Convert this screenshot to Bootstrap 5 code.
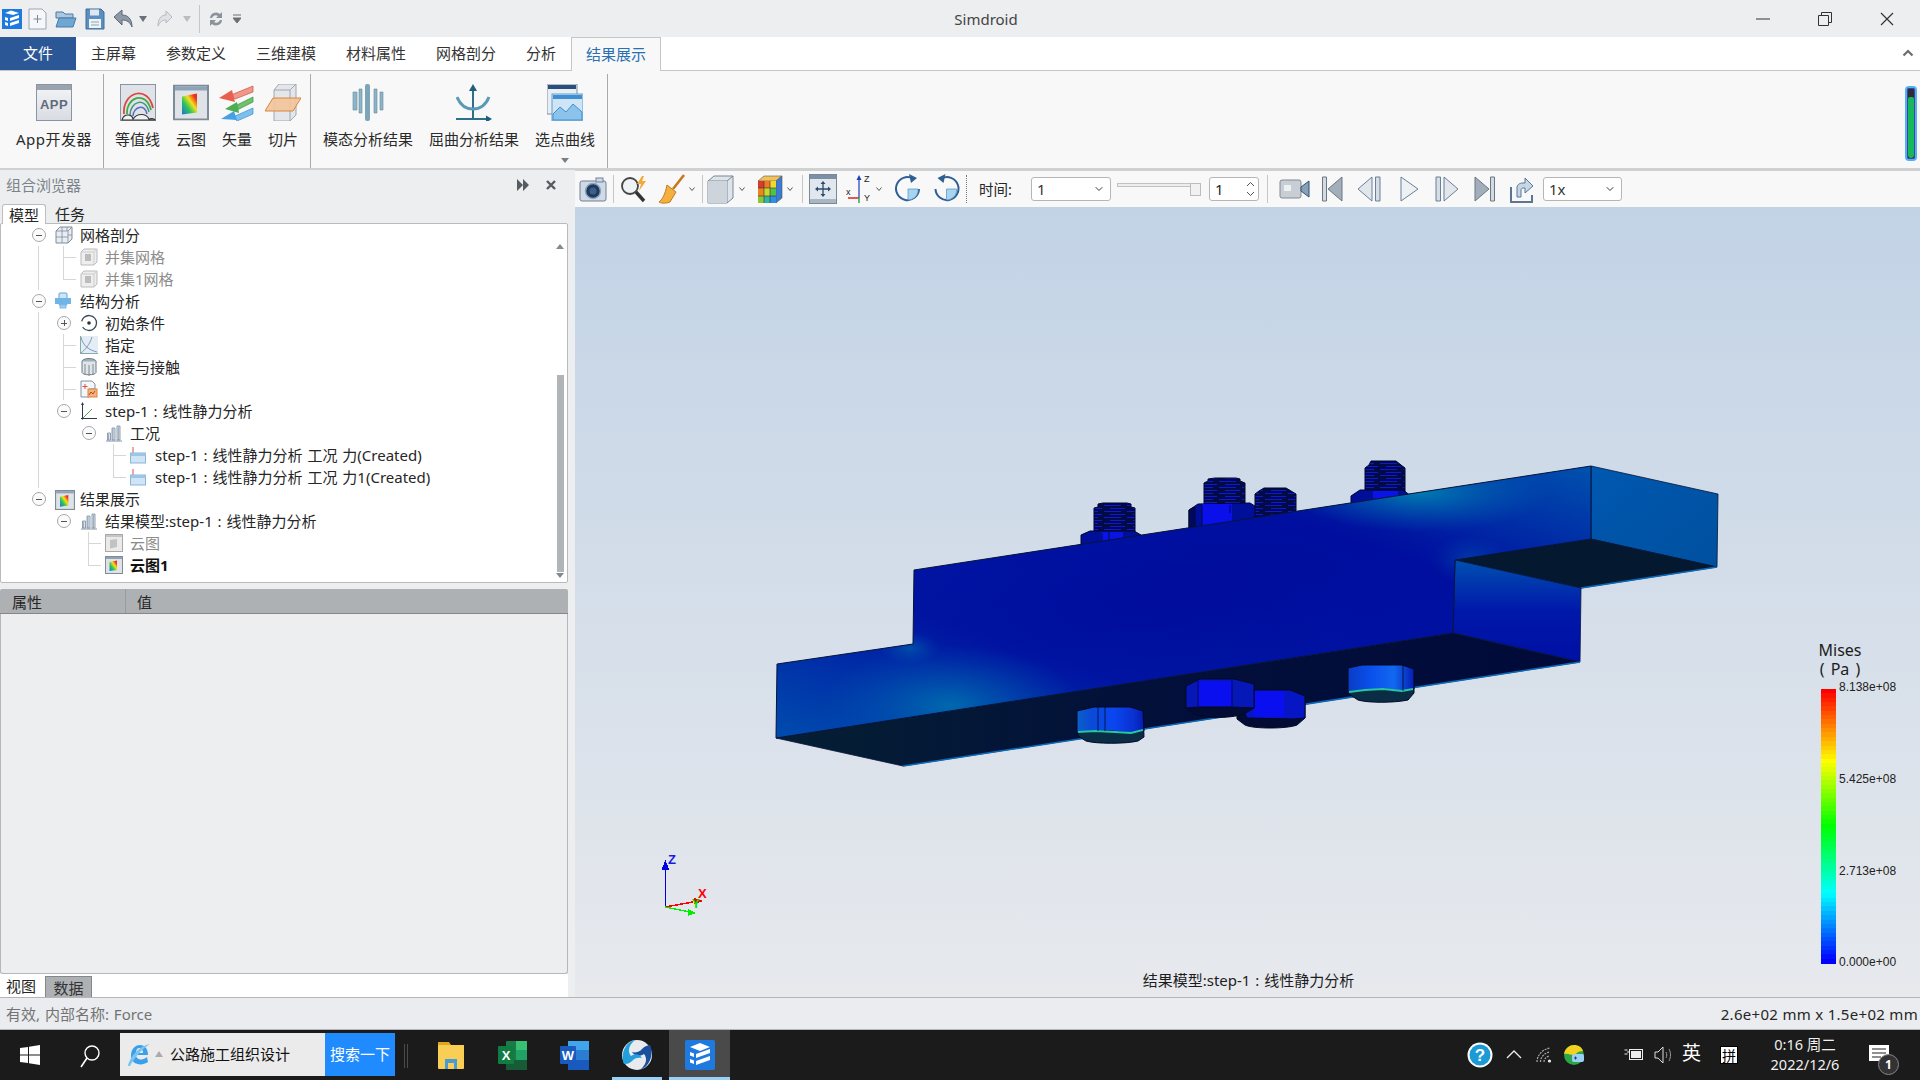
<!DOCTYPE html>
<html lang="zh-CN">
<head>
<meta charset="utf-8">
<title>Simdroid</title>
<link href="https://cdn.jsdelivr.net/npm/bootstrap@5.3.0/dist/css/bootstrap.min.css" rel="stylesheet">
<style>
html,body{height:100%;overflow:hidden}
body{font-family:"Noto Sans","Noto Sans CJK SC",sans-serif;font-size:15px;color:#262626;background:#eceef0;line-height:22px}
svg{display:block;flex:none}
.app-shell{width:1920px;height:1080px}
.title-bar{height:37px;background:#eceef0;padding-left:2px}
.title-text{position:absolute;left:0;right:0;top:8px;text-align:center;font-size:15px;color:#444;pointer-events:none;padding-left:52px}
.win-btns{position:absolute;right:2px;top:0}
.win-btn{width:62px;height:37px}
.tab-row{height:33px;background:#fff;position:relative}
.tab-file{width:76px;background:#2b5797;color:#fff;text-align:center;line-height:32px}
.tab-item{padding:0 15px;line-height:32px;color:#333;white-space:nowrap}
.tab-on{color:#2b6fb3;background:#f8f8f8;border:1px solid #c6c6c6;border-bottom:0;padding:0 14px;height:34px;position:relative;z-index:2}
.tab-up{position:absolute;left:1902px;top:11px}
.ribbon{height:100px;background:#f8f8f8;border-top:1px solid #c6c6c6;border-bottom:2px solid #cfd0d1;position:relative}
.rib-group{height:94px;margin-top:3px;border-right:1px solid #a9a9a9;gap:16px;padding-left:12px}
.rib-g1{width:104px;padding-left:16px}
.rib-g2{width:207px;padding-left:11px}
.rib-g3{width:297px;padding-left:12px}
.rib-item{font-size:15px;white-space:nowrap;text-align:center;color:#2a2a2a;position:relative}
.rib-ic{height:37px;margin-top:10px;margin-bottom:7px;display:flex;justify-content:center}
.rib-ic svg{margin:0 -4px}
.rib-wide{letter-spacing:.5px}
.rib-caret{position:absolute;left:50%;margin-left:-4px;top:84px;width:0;height:0;border:4px solid transparent;border-top:5px solid #7b7f84;border-bottom:0}
.level-meter{position:absolute;left:1905px;top:15px;width:12px;height:75px;background:#2b2b3c;border-radius:4px;border:2px solid #4fb2f2;box-shadow:inset 0 0 0 1px #4a3f9a}
.level-fill{position:absolute;left:1px;right:1px;bottom:1px;top:9px;background:#16b85c;border-radius:2px 2px 3px 3px}
.side-col{width:575px;background:#eceef0}
.dock-head{height:34px;padding:0 6px;color:#7c838b;line-height:30px;position:relative}
.dock-icons{position:absolute;top:9px;left:516px}
.dock-tabs{height:19px;padding-left:2px}
.dock-tab{height:20px;width:44px;line-height:20px;text-align:center}
.dock-tab-on{background:#fff;border:1px solid #bdbdbd;border-bottom:0;border-radius:3px 3px 0 0;position:relative;z-index:1}
.dock-tab-off{width:48px}
.tree-box{width:568px;height:360px;background:#fff;border:1px solid #b8bbbe;border-radius:2px;position:relative;overflow:hidden}
.tree-list{padding-left:24px;margin:0}
.tree-row{height:22px;white-space:nowrap;word-spacing:1px}
.tree-cell{width:25px;height:22px;position:relative;flex:none}
.tree-icon{width:30px;height:22px;padding:2px 0 0 5px;flex:none}
.line-v::before,.line-t::before,.line-l::before{content:"";position:absolute;left:13px;top:0;bottom:0;border-left:1px solid #d6d6d6}
.line-l::before{bottom:50%}
.line-t::after,.line-l::after{content:"";position:absolute;left:13px;top:50%;width:13px;border-top:1px solid #d6d6d6}
.expander{position:absolute;left:7px;top:4px;width:14px;height:14px;border:1px solid #a6a9ac;border-radius:50%;background:#fbfbfb}
.expander::before{content:"";position:absolute;left:3px;right:3px;top:5.5px;height:1px;background:#555}
.exp-plus::after{content:"";position:absolute;top:3px;bottom:3px;left:5.5px;width:1px;background:#555}
.tree-off{color:#8c8c8c}
.tree-bold{font-weight:700;color:#111}
.vbar{position:absolute;left:556px;top:151px;width:7px;height:197px;background:#b2b5b8}
.vbar-up,.vbar-down{position:absolute;left:555px;width:0;height:0;border:4px solid transparent}
.vbar-up{top:20px;border-bottom:5px solid #85898d;border-top:0}
.vbar-down{top:349px;border-top:5px solid #85898d;border-bottom:0}
.prop-head{width:568px;height:25px;margin-top:6px;background:#aeb1b4;border-bottom:1px solid #85888b;border-radius:2px 2px 0 0;line-height:27px}
.prop-c1{width:126px;padding-left:12px;border-right:1px solid #999c9f}
.prop-c2{padding-left:11px}
.prop-body{width:568px;height:360px;background:#eceef0;border:1px solid #b4b7ba;border-top:0;border-radius:0 0 3px 3px}
.bottom-tabs{width:568px;height:23px;background:#fff;position:relative}
.btab{line-height:25px;padding-left:6px;width:45px}
.btab-on{width:47px;height:21px;margin-top:2px;background:#aeb1b4;border:1px solid #85888b;border-bottom:0;padding:0;text-align:center;line-height:23px;color:#333}
.main-area{height:827px}
.tool-bar{height:37px;background:#f8f8f8;border-top:1px solid #cfd0d1}
.tsep{width:1px;height:28px;background:#c4c6c8;flex:none}
.tsep-dot{background:none;border-left:1px dotted #777}
.tcaret{width:6px;flex:none}
.tlabel{width:34px;font-size:14.5px;white-space:nowrap;line-height:18px}
.tb-select{height:24px;padding:0 0 0 5px;font-size:15px;line-height:22px;color:#333;border:1px solid #b6b6b6;border-radius:3px;background-color:#fff;background-position:right 6px center;background-size:10px 8px;box-shadow:none}
.sel-a{width:80px;margin-left:18px;padding-right:16px}
.sel-b{width:79px;margin-left:8px}
.slider-track{width:84px;height:14px;margin-left:6px;position:relative}
.slider-track::before{content:"";position:absolute;left:0;right:10px;top:1px;height:4px;background:#eee;border:1px solid #c2c2c2}
.slider-thumb{position:absolute;right:0;top:1px;width:11px;height:13px;background:#f1f1f1;border:1px solid #bcbcbc}
.spin-box{width:50px;height:24px;margin-left:8px;background:#fff;border:1px solid #b6b6b6;border-radius:3px;padding-left:5px;line-height:22px;font-size:15px;position:relative}
.spin-arrows{position:absolute;right:3px;top:3px}
.m3{margin-left:3px}.m4{margin-left:4px}.m5{margin-left:5px}.m6{margin-left:6px}.m7{margin-left:7px}.m8{margin-left:8px}.m9{margin-left:9px}.m11{margin-left:11px}.m12{margin-left:12px}.m13{margin-left:13px}.m14{margin-left:14px}.m15{margin-left:15px}.m16{margin-left:16px}.m18{margin-left:18px}
.view-port{height:790px;position:relative;background:linear-gradient(#c2d3e6,#e7e9ed);overflow:hidden}
.view-canvas{position:absolute;left:0;top:0}
.legend-title{position:absolute;left:1235px;top:434px;width:60px;text-align:center;font-size:16px;line-height:19px;color:#1c1c1c}
.legend-pa{word-spacing:2px}
.legend-val{position:absolute;left:1264px;font-size:12px;line-height:14px;color:#222;white-space:nowrap;font-family:"Liberation Sans",sans-serif}
.val-1{top:473px}.val-2{top:565px}.val-3{top:657px}.val-4{top:748px}
.view-caption{position:absolute;left:0;right:-2px;top:762px;text-align:center;font-size:15px;word-spacing:1px;color:#1d1d1d}
.status-bar{height:33px;background:#eaecef;border-top:1px solid #b5b5b5;border-bottom:1px solid #b5b5b5;padding:0 2px 0 6px;line-height:32px}
.status-l{color:#737373;word-spacing:1px}
.status-r{color:#262626;font-size:15px;letter-spacing:.3px}
.task-bar{height:50px;background:#1b1b1b;color:#fff;position:relative}
.search-box{position:absolute;left:120px;top:3px;width:205px;height:43px;background:#ebebeb;color:#111;line-height:43px;padding-left:50px}
.search-go{position:absolute;left:325px;top:3px;width:70px;height:43px;background:#1f8bff;color:#fff;line-height:43px;text-align:center}
.task-sep{position:absolute;left:404px;top:14px;width:4px;height:24px;border-left:1px solid #4a4a4a;border-right:1px solid #4a4a4a}
.task-app{position:absolute;top:0;height:50px}
.task-active{left:669px;width:61px;background:#4a4a4a;border-bottom:3px solid #99d1f5;padding-top:10px}
.task-under{left:612px;width:50px;border-bottom:3px solid #99d1f5}
.tk{position:absolute}
.tk-win{left:20px;top:15px}.tk-find{left:79px;top:14px}.tk-ie{left:8px;top:9px}
.tk-folder{left:437px}.tk-xl{left:498px}.tk-wd{left:560px}.tk-s{left:622px}
.tk-help{left:1467px;top:12px}.tk-up{left:1506px;top:19px}.tk-wifi{left:1536px;top:17px}.tk-game{left:1564px;top:15px}.tk-bat{left:1624px;top:17px}.tk-vol{left:1654px;top:15px}.tk-note{left:1869px;top:15px}
.tray-txt{position:absolute;white-space:nowrap}
.tray-en{left:1682px;top:12px;font-size:19px}
.tray-pin{left:1720px;top:16px;width:18px;height:18px;background:#fff;color:#000;font-size:14px;line-height:18px;text-align:center;border:1px solid #000}
.tray-clock{left:1760px;top:4px;width:90px;text-align:center;font-size:14.5px;line-height:20px;color:#f0f0f0}
.tray-badge{position:absolute;left:1878px;top:24px;width:21px;height:21px;border:1px solid #888;background:#333;border-radius:50%;text-align:center;font-size:12px;font-weight:700;line-height:19px}
</style>
</head>
<body>
<svg width="0" height="0" class="position-absolute">
<defs>
<symbol id="i-mesh" viewBox="0 0 18 18"><path d="M1 5 5 1h12v12l-4 4H1z" fill="#e8edf2" stroke="#7f8c99"/><path d="M1 5h12v12M13 5l4-4M7 1v4M12 1v4M1 11h12M7 5v12M13 9h4" fill="none" stroke="#7f8c99" stroke-width=".8"/></symbol>
<symbol id="i-gmesh" viewBox="0 0 18 18"><path d="M1 4 4 1h13v13l-3 3H1z" fill="#eee" stroke="#bbb"/><path d="M1 4h13v13M14 4l3-3" fill="none" stroke="#ccc"/><rect x="5" y="6" width="6" height="7" fill="#bcbcbc"/></symbol>
<symbol id="i-case" viewBox="0 0 18 18"><rect x="4" y="1" width="8" height="12" rx="1" fill="#cfe6f7" stroke="#5ba5da"/><rect x="0" y="6" width="16" height="6" fill="#6fb6e6"/><rect x="5" y="13" width="6" height="3" fill="#a7d3f0" stroke="#5ba5da" stroke-width=".7"/></symbol>
<symbol id="i-load" viewBox="0 0 16 18"><path d="M3 1v6" stroke="#d9534f"/><rect x=".5" y="7" width="15" height="10" fill="#cfe4f6" stroke="#8bb5d8"/><rect x=".5" y="7" width="15" height="3" fill="#9cc5e6"/></symbol>
<symbol id="i-cloud" viewBox="0 0 18 18"><rect x=".5" y=".5" width="17" height="17" fill="#dfe3e8" stroke="#7e8b99"/><rect x="1" y="1" width="16" height="2" fill="#8ea3b8"/><path d="M4.500 6 12 4.500V14l-7.500 1z" fill="url(#rainbow)"/></symbol>
<linearGradient id="rainbow" x1="0" y1="1" x2="1" y2="0"><stop offset="0" stop-color="#1c6fe0"/><stop offset=".35" stop-color="#2cc45b"/><stop offset=".6" stop-color="#f4e11c"/><stop offset=".85" stop-color="#ee2e1c"/></linearGradient>
<symbol id="i-gcloud" viewBox="0 0 18 18"><rect x=".5" y=".5" width="17" height="17" fill="#eaeaea" stroke="#a8a8a8"/><rect x="1" y="1" width="16" height="2" fill="#c6c6c6"/><path d="M5 6 12 5v8l-7 1.500z" fill="#c2c2c2"/></symbol>
<symbol id="i-bars" viewBox="0 0 18 18"><path d="M1 17h16" stroke="#8292a4"/><path d="M2.500 16V9h3v7zM7 16V4h3v12zM12 16V2h3v14z" fill="#dbe4ee" stroke="#7a8ba0" stroke-width=".8"/><path d="M3.500 10v6M8 5v11M13.500 3v13" stroke="#7a8ba0" stroke-width=".6"/></symbol>
<pattern id="thread" width="23" height="6" patternUnits="userSpaceOnUse"><rect width="23" height="6" fill="#020a48"/><rect x="0" y="1" width="17" height="1" fill="#0c1ad8"/><rect x="6" y="4" width="15" height="1" fill="#0c1ad8"/></pattern>
<linearGradient id="gFront" x1="0" y1="1" x2="1" y2="0"><stop offset="0" stop-color="#004cae"/><stop offset=".32" stop-color="#0014a2"/><stop offset=".72" stop-color="#000fa0"/><stop offset="1" stop-color="#0052ae"/></linearGradient>
<radialGradient id="gTeal"><stop offset="0" stop-color="#0080b0" stop-opacity=".95"/><stop offset="1" stop-color="#0060b0" stop-opacity="0"/></radialGradient>
<radialGradient id="gDeep"><stop offset="0" stop-color="#000c9c"/><stop offset="1" stop-color="#000e9e" stop-opacity="0"/></radialGradient>
<linearGradient id="gEnd" x1="0" y1="0" x2="1" y2="1"><stop offset="0" stop-color="#0058b0"/><stop offset="1" stop-color="#00509f"/></linearGradient>
<linearGradient id="gSide" x1="0" y1="0" x2="0" y2="1"><stop offset="0" stop-color="#0050b0"/><stop offset=".5" stop-color="#0018aa"/><stop offset="1" stop-color="#0010a4"/></linearGradient>
<linearGradient id="gBottom" x1="0" y1="0" x2="1" y2="0"><stop offset="0" stop-color="#051f33"/><stop offset=".45" stop-color="#02103a"/><stop offset="1" stop-color="#010a3a"/></linearGradient>
<linearGradient id="gNutA" x1="0" y1="0" x2="1" y2="0"><stop offset="0" stop-color="#0a60c8"/><stop offset=".22" stop-color="#0a4ad8"/><stop offset=".55" stop-color="#0a46f0"/><stop offset=".85" stop-color="#0a30d0"/><stop offset="1" stop-color="#061cb0"/></linearGradient>
<linearGradient id="gNutB" x1="0" y1="0" x2="1" y2="0"><stop offset="0" stop-color="#0a3cc4"/><stop offset=".35" stop-color="#0a50ec"/><stop offset=".7" stop-color="#1268f0"/><stop offset="1" stop-color="#061cb0"/></linearGradient>
<linearGradient id="gWin" x1="0" y1="0" x2="0" y2="1"><stop offset="0" stop-color="#f4f6f8"/><stop offset="1" stop-color="#d8dce2"/></linearGradient>
<clipPath id="clipFront"><polygon points="777,664 913,644 914,570 1591,466 1591,539 1455,560 1453,633 776,738"/></clipPath>
</defs>
</svg>

<div class="app-shell d-flex flex-column">

<header class="title-bar d-flex align-items-center position-relative">
  <svg width="26" height="30" viewBox="0 0 26 30"><rect x="0" y="5" width="20" height="20" fill="#1f7ae0"/><path d="M3 9l6-2.500L17 9l-6 2zM3 13l3 1v3l-3-1zM8 14l9-3v3l-9 3zM3 18l3 1v3l-3-1zM8 19l9-3v3l-9 3z" fill="#fff"/></svg>
  <svg width="20" height="24" viewBox="0 0 20 24"><path d="M1 2h13l4 4v16H1z" fill="#f5f7f9" stroke="#9aa6b2"/><path d="M9.500 8v8M5.500 12h8" stroke="#7c8894"/></svg>
  <svg width="22" height="22" viewBox="0 0 22 22" class="m7"><path d="M1 4h7l2 2h8v4H1z" fill="#a9c7e2" stroke="#4f7aa3"/><path d="M1 19 4 10h17l-3 9z" fill="#6ea6d4" stroke="#4f7aa3"/></svg>
  <svg width="20" height="22" viewBox="0 0 20 22" class="m8"><path d="M1 1h15l3 3v17H1z" fill="#5b8fc1" stroke="#3f6d9b"/><rect x="5" y="1.500" width="9" height="6" fill="#dfe8f1"/><rect x="4" y="11" width="12" height="9" fill="#eef2f6"/><path d="M6 14h8M6 17h8" stroke="#8aa"/></svg>
  <svg width="20" height="20" viewBox="0 0 20 20" class="m8"><path d="M1 8 9 1v5c6 0 10 4 10 12-2-5-5-7-10-7v5z" fill="#8e99a5" stroke="#5d6874"/></svg>
  <svg width="10" height="8" viewBox="0 0 10 8" class="m5"><path d="M1 1h8L5 7z" fill="#6b7076"/></svg>
  <svg width="16" height="18" viewBox="0 0 16 18" class="m9"><path d="M15 7 9 1v4C4 5 1 9 1 16c2-4 4-6 8-6v3z" fill="#dfe2e6" stroke="#b5bac0"/></svg>
  <svg width="10" height="8" viewBox="0 0 10 8" class="m9"><path d="M1 1h8L5 7z" fill="#b9bcc0"/></svg>
  <div class="tsep m7" aria-hidden="true"></div>
  <svg width="16" height="18" viewBox="0 0 16 18" class="m8"><path d="M2 8a6 6 0 0 1 10-4l2-2v6H8l2-2a4 4 0 0 0-6 2zM14 10a6 6 0 0 1-10 4l-2 2v-6h6l-2 2a4 4 0 0 0 6-2z" fill="#8b9299"/></svg>
  <svg width="8" height="10" viewBox="0 0 8 10" class="m9"><path d="M0 1h8M0 4h8L4 9z" stroke="#6b7076" fill="#6b7076"/></svg>
  <div class="title-text">Simdroid</div>
  <div class="win-btns d-flex">
    <div class="win-btn d-flex align-items-center justify-content-center"><svg width="14" height="2"><path d="M0 1h14" stroke="#333"/></svg></div>
    <div class="win-btn d-flex align-items-center justify-content-center"><svg width="14" height="14"><path d="M.5 3.500h10v10H.5zM3.500 3V.5h10v10H11" fill="none" stroke="#333"/></svg></div>
    <div class="win-btn d-flex align-items-center justify-content-center"><svg width="14" height="14"><path d="M1 1l12 12M13 1 1 13" stroke="#333" stroke-width="1.200"/></svg></div>
  </div>
</header>

<nav class="tab-row d-flex">
  <div class="tab-file">文件</div>
  <div class="tab-item">主屏幕</div>
  <div class="tab-item">参数定义</div>
  <div class="tab-item">三维建模</div>
  <div class="tab-item">材料属性</div>
  <div class="tab-item">网格剖分</div>
  <div class="tab-item">分析</div>
  <div class="tab-item tab-on">结果展示</div>
  <svg class="tab-up" width="12" height="9" viewBox="0 0 12 9"><path d="M1.500 7.500 6 3l4.500 4.500" fill="none" stroke="#6a6e73" stroke-width="2.200"/></svg>
</nav>

<section class="ribbon d-flex">
  <div class="rib-group rib-g1 d-flex">
    <div class="rib-item rib-wide"><div class="rib-ic"><svg width="36" height="37" viewBox="0 0 36 37"><rect x=".5" y=".5" width="35" height="36" fill="url(#gWin)" stroke="#8a95a3"/><rect x="1" y="1" width="34" height="5" fill="#9aa3ae"/><text x="18" y="25" text-anchor="middle" font-size="13" font-weight="700" fill="#5f6b79" font-family="Liberation Sans,sans-serif">APP</text></svg></div>App开发器</div>
  </div>
  <div class="rib-group rib-g2 d-flex">
    <div class="rib-item"><div class="rib-ic"><svg width="36" height="37" viewBox="0 0 36 37"><rect x=".5" y=".5" width="35" height="36" fill="#dfe2e6" stroke="#8a95a3"/><path d="M4 30C2 8 28 0 33 24" fill="none" stroke="#d84a40" stroke-width="1.800"/><path d="M7 30C6 13 26 6 31 26" fill="none" stroke="#45a84f" stroke-width="1.800"/><path d="M10 31C10 18 25 12 29 28" fill="none" stroke="#3f9a7a" stroke-width="1.500"/><path d="M13 32c0-9 12-13 14-2" fill="none" stroke="#5a6ac8" stroke-width="1.500"/><path d="M2 36c2-7 10-6 11-1 4-6 13-6 16 0 3-1 6 0 6 1z" fill="#f0f2f4" stroke="#333" stroke-width="1.200"/></svg></div>等值线</div>
    <div class="rib-item"><div class="rib-ic"><svg width="36" height="37" viewBox="0 0 18 18"><use href="#i-cloud"/></svg></div>云图</div>
    <div class="rib-item"><div class="rib-ic"><svg width="36" height="37" viewBox="0 0 36 37"><path d="M12 11 34 2v6L16 15z" fill="#f0968a" stroke="#c8553f" stroke-width=".7"/><path d="M0 14l13-8 3 12z" fill="#e8604e"/><path d="M14 23 34 13v5l-16 8z" fill="#6dc36a" stroke="#3a8f44" stroke-width=".7"/><path d="M6 25l12-7 2 11z" fill="#4cad53"/><path d="M14 33 34 24v6l-16 7z" fill="#7cc0ee" stroke="#3f8fd0" stroke-width=".7"/><path d="M2 35l13-8 3 9z" fill="#47a0e4"/></svg></div>矢量</div>
    <div class="rib-item"><div class="rib-ic"><svg width="36" height="37" viewBox="0 0 36 37"><path d="M9 6l5-6h17v31l-6 6H9z" fill="#e3e6ea" stroke="#a0a8b0"/><path d="M9 6h16v31M25 6l6-6" fill="none" stroke="#a0a8b0"/><path d="M0 27 8 14h28l-8 13z" fill="#f2c49a" fill-opacity=".9" stroke="#d8863e"/></svg></div>切片</div>
  </div>
  <div class="rib-group rib-g3 d-flex">
    <div class="rib-item"><div class="rib-ic"><svg width="32" height="37" viewBox="0 0 32 37"><rect x="13" y="0" width="5" height="37" rx="2" fill="#7ea4b8"/><path d="M1 8h4v18H1zM7 5h3v24H7zM22 5h3v24h-3zM28 8h3v18h-3z" fill="#8eb4c9" stroke="#66899c" stroke-width=".6"/></svg></div>模态分析结果</div>
    <div class="rib-item"><div class="rib-ic"><svg width="36" height="37" viewBox="0 0 36 37"><path d="M17 36V4" stroke="#2f6f8a" stroke-width="2"/><path d="M17 0l-4 7h8z" fill="#1f5f7c"/><path d="M1 13c4 10 11 12 16 12s12-2 16-12" fill="none" stroke="#5a9ab5" stroke-width="3"/><path d="M0 35h34" stroke="#2f6f8a" stroke-width="2"/><path d="M36 35l-6-3.500v7z" fill="#1f5f7c"/></svg></div>屈曲分析结果</div>
    <div class="rib-item"><div class="rib-ic"><svg width="36" height="37" viewBox="0 0 36 37"><rect x="0" y="0" width="30" height="30" fill="#e9eef3" stroke="#7f8e9d"/><rect x="1" y="1" width="28" height="4" fill="#2a4f7c"/><rect x="5" y="10" width="31" height="27" fill="#cfe4f4" stroke="#5aa0d4"/><rect x="6" y="11" width="29" height="4" fill="#3f8fd0"/><path d="M6 36V30l7-7 6 5 7-8 9 8v8z" fill="#8cc3ea" stroke="#3f8fd0"/></svg></div>选点曲线<span class="rib-caret"></span></div>
  </div>
  <div class="level-meter"><div class="level-fill"></div></div>
</section>

<main class="main-area d-flex">
  <aside class="side-col d-flex flex-column">
    <div class="dock-head">
      <span>组合浏览器</span>
      <span class="dock-icons d-flex align-items-center">
        <svg width="14" height="12" viewBox="0 0 14 12"><path d="M1 0l6 6-6 6zM7 0l6 6-6 6z" fill="#555b62"/></svg>
        <svg width="12" height="12" viewBox="0 0 12 12" class="m15"><path d="M2 2l8 8M10 2l-8 8" stroke="#555b62" stroke-width="2.400"/></svg>
      </span>
    </div>
    <div class="dock-tabs d-flex">
      <div class="dock-tab dock-tab-on">模型</div>
      <div class="dock-tab dock-tab-off">任务</div>
    </div>
    <div class="tree-box">
      <ul class="tree-list list-unstyled">
        <li class="tree-row d-flex"><div class="tree-cell"><span class="expander"></span></div><div class="tree-icon"><svg width="18" height="18"><use href="#i-mesh"/></svg></div>网格剖分</li>
        <li class="tree-row d-flex tree-off"><div class="tree-cell line-v"></div><div class="tree-cell line-t"></div><div class="tree-icon"><svg width="18" height="18"><use href="#i-gmesh"/></svg></div>并集网格</li>
        <li class="tree-row d-flex tree-off"><div class="tree-cell line-v"></div><div class="tree-cell line-l"></div><div class="tree-icon"><svg width="18" height="18"><use href="#i-gmesh"/></svg></div>并集1网格</li>
        <li class="tree-row d-flex"><div class="tree-cell"><span class="expander"></span></div><div class="tree-icon"><svg width="18" height="18"><use href="#i-case"/></svg></div>结构分析</li>
        <li class="tree-row d-flex"><div class="tree-cell line-v"></div><div class="tree-cell"><span class="expander exp-plus"></span></div><div class="tree-icon"><svg width="18" height="18" viewBox="0 0 18 18"><circle cx="9" cy="9" r="7.500" fill="none" stroke="#3a4a5c" stroke-width="1.300" stroke-dasharray="36 6" transform="rotate(-130 9 9)"/><circle cx="9" cy="9" r="1.800" fill="#26323e"/></svg></div>初始条件</li>
        <li class="tree-row d-flex"><div class="tree-cell line-v"></div><div class="tree-cell line-t"></div><div class="tree-icon"><svg width="18" height="18" viewBox="0 0 18 18"><rect width="18" height="18" fill="#e4ecf4"/><path d="M1 1c2 9 8 13 16 15M1 17C5 14 10 8 12 1" fill="none" stroke="#7d9cc0"/><path d="M.5 0v18M0 17.500h18" stroke="#8aa"/></svg></div>指定</li>
        <li class="tree-row d-flex"><div class="tree-cell line-v"></div><div class="tree-cell line-t"></div><div class="tree-icon"><svg width="18" height="18" viewBox="0 0 18 18"><ellipse cx="9" cy="3.500" rx="7" ry="3" fill="#9fb0b8" stroke="#6b7a82"/><path d="M2 3.500v11c1 3 13 3 14 0v-11" fill="#dfe5e8" stroke="#6b7a82"/><path d="M5 6v11M9 7v11M13 6v11" stroke="#7e8e96"/></svg></div>连接与接触</li>
        <li class="tree-row d-flex"><div class="tree-cell line-v"></div><div class="tree-cell line-t"></div><div class="tree-icon"><svg width="18" height="18" viewBox="0 0 18 18"><path d="M1 1h11l3 3v5H9v8H1z" fill="#f4f6f8" stroke="#8292a4"/><path d="M5 4v5M2.500 6.500h5" stroke="#d9534f"/><rect x="8" y="9" width="9" height="8" fill="#f4b183" stroke="#d8863e"/><path d="M9 15l2-3 2 2 2-3" fill="none" stroke="#b04a12"/></svg></div>监控</li>
        <li class="tree-row d-flex"><div class="tree-cell line-v"></div><div class="tree-cell"><span class="expander"></span></div><div class="tree-icon"><svg width="18" height="18" viewBox="0 0 18 18"><path d="M2.500 17.500V1" stroke="#2d3a48"/><path d="M2.500 0 1 3h3z" fill="#2d3a48"/><path d="M1 16.500h16" stroke="#2d3a48"/><path d="M3 16 12 7" stroke="#50a050"/></svg></div>step-1 : 线性静力分析</li>
        <li class="tree-row d-flex"><div class="tree-cell line-v"></div><div class="tree-cell"></div><div class="tree-cell"><span class="expander"></span></div><div class="tree-icon"><svg width="18" height="18"><use href="#i-bars"/></svg></div>工况</li>
        <li class="tree-row d-flex"><div class="tree-cell line-v"></div><div class="tree-cell"></div><div class="tree-cell"></div><div class="tree-cell line-t"></div><div class="tree-icon"><svg width="16" height="18"><use href="#i-load"/></svg></div>step-1 : 线性静力分析 工况 力(Created)</li>
        <li class="tree-row d-flex"><div class="tree-cell line-v"></div><div class="tree-cell"></div><div class="tree-cell"></div><div class="tree-cell line-l"></div><div class="tree-icon"><svg width="16" height="18"><use href="#i-load"/></svg></div>step-1 : 线性静力分析 工况 力1(Created)</li>
        <li class="tree-row d-flex"><div class="tree-cell"><span class="expander"></span></div><div class="tree-icon"><svg width="20" height="20"><use href="#i-cloud"/></svg></div>结果展示</li>
        <li class="tree-row d-flex"><div class="tree-cell"></div><div class="tree-cell"><span class="expander"></span></div><div class="tree-icon"><svg width="18" height="18"><use href="#i-bars"/></svg></div>结果模型:step-1 : 线性静力分析</li>
        <li class="tree-row d-flex tree-off"><div class="tree-cell"></div><div class="tree-cell"></div><div class="tree-cell line-t"></div><div class="tree-icon"><svg width="18" height="18"><use href="#i-gcloud"/></svg></div>云图</li>
        <li class="tree-row d-flex tree-bold"><div class="tree-cell"></div><div class="tree-cell"></div><div class="tree-cell line-l"></div><div class="tree-icon"><svg width="18" height="18"><use href="#i-cloud"/></svg></div>云图1</li>
      </ul>
      <div class="vbar-up"></div><div class="vbar"></div><div class="vbar-down"></div>
    </div>
    <div class="prop-head d-flex"><div class="prop-c1">属性</div><div class="prop-c2">值</div></div>
    <div class="prop-body"></div>
    <div class="bottom-tabs d-flex"><div class="btab">视图</div><div class="btab btab-on">数据</div></div>
  </aside>

  <section class="flex-grow-1 d-flex flex-column">
    <div class="tool-bar d-flex align-items-center">
      <svg class="m3" width="30" height="30" viewBox="0 0 30 30"><rect x="2" y="7" width="26" height="20" rx="2" fill="#cfdae6" stroke="#6e8296"/><rect x="18" y="4" width="7" height="4" fill="#cfdae6" stroke="#6e8296"/><circle cx="15" cy="17" r="7.500" fill="#1f3a5f" stroke="#8ea3b8" stroke-width="1.500"/><circle cx="15" cy="17" r="3.500" fill="#3d5f8a"/></svg>
      <div class="tsep m5"></div>
      <svg class="m5" width="30" height="30" viewBox="0 0 30 30"><circle cx="11" cy="12" r="8" fill="#eef2f5" stroke="#444" stroke-width="1.800"/><path d="M17 18l8 9" stroke="#333" stroke-width="3.400"/><path d="M23 2l-5 8h4l-2 7 7-10h-4l2-5z" fill="#f0a93a"/></svg>
      <svg class="m9" width="28" height="30" viewBox="0 0 28 30"><path d="M26 1 15 15" stroke="#c57a1f" stroke-width="2.600"/><path d="M9 11l9 7-6 10C7 30 2 29 1 28c3-2 6-7 8-17z" fill="#f3b03e" stroke="#c57a1f"/></svg>
      <svg class="m3 tcaret" width="6" height="6" viewBox="0 0 6 6"><path d="M.5 1.500 3 4.500l2.500-3" fill="none" stroke="#555"/></svg>
      <div class="tsep m7"></div>
      <svg class="m4" width="28" height="30" viewBox="0 0 28 30"><path d="M1 7l6-5h19v22l-6 5H1z" fill="#dfe4ea" stroke="#7a8794"/><path d="M1 7h19v22M20 7l6-5" fill="none" stroke="#7a8794"/><path d="M1 7h19v22H1z" fill="#cdd4dc"/></svg>
      <svg class="m4 tcaret" width="6" height="6" viewBox="0 0 6 6"><path d="M.5 1.500 3 4.500l2.500-3" fill="none" stroke="#555"/></svg>
      <svg class="m11" width="28" height="30" viewBox="0 0 28 30"><path d="M2 7l6-5h18l-6 5z" fill="#f0c35a" stroke="#555" stroke-width=".6"/><path d="M20 7l6-5v22l-6 5z" fill="#3a7bd5" stroke="#555" stroke-width=".6"/><rect x="2" y="7" width="6" height="7" fill="#d83a2c"/><rect x="8" y="7" width="6" height="7" fill="#ee7a25"/><rect x="14" y="7" width="6" height="7" fill="#f4d62c"/><rect x="2" y="14" width="6" height="8" fill="#e8861f"/><rect x="8" y="14" width="6" height="8" fill="#c7d92c"/><rect x="14" y="14" width="6" height="8" fill="#52c14a"/><rect x="2" y="22" width="6" height="7" fill="#8ac83a"/><rect x="8" y="22" width="6" height="7" fill="#33b6a0"/><rect x="14" y="22" width="6" height="7" fill="#2f8fe0"/><path d="M2 14h18M2 22h18M8 7v22M14 7v22" stroke="#333" stroke-width=".6"/></svg>
      <svg class="m3 tcaret" width="6" height="6" viewBox="0 0 6 6"><path d="M.5 1.500 3 4.500l2.500-3" fill="none" stroke="#555"/></svg>
      <div class="tsep m9"></div>
      <svg class="m6" width="28" height="30" viewBox="0 0 28 30"><rect x=".5" y=".5" width="27" height="29" fill="#e1e7ee" stroke="#7a8794"/><rect x="1" y="1" width="26" height="4" fill="#7d8fa3"/><rect x="1" y="25" width="26" height="4" fill="#a9b6c4"/><path d="M14 9v12M8 15h12" stroke="#2f4a68" stroke-width="1.300"/><path d="M14 7l-2.500 3h5zM14 23l-2.500-3h5zM6 15l3-2.500v5zM22 15l-3-2.500v5z" fill="#2f4a68"/></svg>
      <svg class="m9" width="26" height="30" viewBox="0 0 26 30"><path d="M13 24V5" stroke="#1d3fb8" stroke-width="1.200"/><path d="M13 1l-2.500 5h5z" fill="#1d3fb8"/><path d="M2 24h11" stroke="#d8261c" stroke-width="1.500"/><path d="M13 24v5" stroke="#2aa84a" stroke-width="1.500"/><text x="18" y="8" font-size="9" fill="#222" font-family="Liberation Sans,sans-serif">Z</text><text x="0" y="21" font-size="9" fill="#222" font-family="Liberation Sans,sans-serif">x</text><text x="18" y="27" font-size="9" fill="#222" font-family="Liberation Sans,sans-serif">Y</text></svg>
      <svg class="m4 tcaret" width="6" height="6" viewBox="0 0 6 6"><path d="M.5 1.500 3 4.500l2.500-3" fill="none" stroke="#555"/></svg>
      <svg class="m13" width="26" height="30" viewBox="0 0 26 30"><path d="M18 4.500A11.500 11.500 0 1 0 24 15" fill="none" stroke="#2f5f92" stroke-width="2"/><path d="M14 0l8 4-6 5z" fill="#2f5f92"/><path d="M13 15h10v3a10 10 0 0 1-10 8z" fill="#a9d4f0" stroke="#4a90c8" stroke-width=".7"/></svg>
      <svg class="m12" width="27" height="30" viewBox="0 0 26 30"><path d="M8 4.500A11.500 11.500 0 1 1 2 15" fill="none" stroke="#2f5f92" stroke-width="2"/><path d="M12 0 4 4l6 5z" fill="#2f5f92"/><path d="M13 15h10v3a10 10 0 0 1-10 8z" fill="#a9d4f0" stroke="#4a90c8" stroke-width=".7"/></svg>
      <div class="tsep tsep-dot m6"></div>
      <span class="tlabel m12">时间:</span>
      <select class="form-select tb-select sel-a" aria-label="时间"><option>1</option></select>
      <div class="slider-track"><span class="slider-thumb"></span></div>
      <div class="spin-box">1<svg class="spin-arrows" width="9" height="16" viewBox="0 0 9 16"><path d="M1 5 4.500 1.500 8 5M1 11l3.500 3.500L8 11" fill="none" stroke="#555"/></svg></div>
      <div class="tsep m8"></div>
      <svg class="m11" width="31" height="24" viewBox="0 0 31 24"><rect x="1" y="3" width="21" height="18" rx="2" fill="#c9ced4" stroke="#7f8a96"/><rect x="5" y="8" width="7" height="6" fill="#eef0f2"/><path d="M22 10 30 4v16l-8-6z" fill="#8aa0b6" stroke="#2d5279"/></svg>
      <svg class="m12" width="21" height="26" viewBox="0 0 21 26"><path d="M.5 1h4v24h-4z" fill="#d5dae0" stroke="#6a7786"/><path d="M20 1v24L6 13z" fill="#a3aebb" stroke="#6a7786"/></svg>
      <svg class="m14" width="25" height="26" viewBox="0 0 25 26"><path d="M15 1v24L1 13z" fill="#e3e7ec" stroke="#6a7f99"/><path d="M18.500 1h4.500v24h-4.500z" fill="#d5dce4" stroke="#6a7f99"/></svg>
      <svg class="m18" width="19" height="26" viewBox="0 0 19 26"><path d="M1 1v24l17-12z" fill="#eef1f4" stroke="#6a7f99"/></svg>
      <svg class="m16" width="24" height="26" viewBox="0 0 24 26"><path d="M1 1h4.500v24H1z" fill="#d5dce4" stroke="#6a7f99"/><path d="M9 1v24l14-12z" fill="#e3e7ec" stroke="#6a7f99"/></svg>
      <svg class="m15" width="21" height="26" viewBox="0 0 21 26"><path d="M1 1v24l14-12z" fill="#a3aebb" stroke="#6a7786"/><path d="M16.500 1h4v24h-4z" fill="#d5dae0" stroke="#6a7786"/></svg>
      <svg class="m15" width="25" height="28" viewBox="0 0 25 28"><path d="M1 12v15h21v-7" fill="none" stroke="#5a7694" stroke-width="2"/><path d="M7 22v-9c0-3 2-5 6-5h2V3l8 8-8 7v-5h-2c-1 0-2 1-2 2v7z" fill="#c5d6e6" stroke="#5a7694"/></svg>
      <select class="form-select tb-select sel-b" aria-label="倍速"><option>1x</option></select>
    </div>

    <div class="view-port">
      <svg class="view-canvas" width="1345" height="790" viewBox="575 207 1345 790">
        <!-- top bolts -->
        <g stroke="#00062e">
          <path d="M1094 535v-27l4-1v-3l5-1h24l4 1v3l4 1v27z" fill="url(#thread)"/>
          <path d="M1081 552v-17l9-4h44l7 4v8z" fill="#000f9a"/>
          <path d="M1101 532h22v12h-22z" fill="#0a14e6" stroke="none"/>
          <path d="M1102 533v11M1109 532v11" stroke-width=".8"/>
          <path d="M1204 508v-25l4-2v-2l7-1h21l4 1v2l5 2v25z" fill="url(#thread)"/>
          <path d="M1189 532v-22l9-6 52-1 8 5v20z" fill="#000f9a"/>
          <path d="M1202 504h30v25h-30z" fill="#0a10ea" stroke="none"/>
          <path d="M1189 532v-22l6-3v24z" fill="#000a5c"/>
          <path d="M1202 505v25M1230 505v8" stroke-width=".8"/>
          <path d="M1255 521v-27l4-3 5-3h22l5 3 5 3v27z" fill="url(#thread)"/>
          <path d="M1365 495v-27l4-3 2-4h25l5 4 4 3v27z" fill="url(#thread)"/>
          <path d="M1351 506v-10l9-6h43l8 6v10z" fill="#000f9a"/>
          <path d="M1373 491h25v11h-25z" fill="#0a14e6" stroke="none"/>
        </g>
        <!-- end faces -->
        <polygon points="1591,466 1718,494 1717,567 1591,539" fill="url(#gEnd)" stroke="#06143a" stroke-width=".8"/>
        <polygon points="1591,539 1717,567 1581,588 1455,560" fill="#04182f" stroke="#06143a" stroke-width=".8"/>
        <path d="M1717 567 1581 588" stroke="#0a6ab8" stroke-width="1.500"/>
        <polygon points="1455,560 1581,588 1580,662 1453,633" fill="url(#gSide)" stroke="#06143a" stroke-width=".8"/>
        <!-- bottom -->
        <polygon points="776,738 1453,633 1580,662 903,766" fill="url(#gBottom)" stroke="#06143a" stroke-width=".8"/>
        <path d="M903 766 1580 662" stroke="#0a6ab8" stroke-width="1.500"/>
        <!-- front -->
        <polygon points="777,664 913,644 914,570 1591,466 1591,539 1455,560 1453,633 776,738" fill="url(#gFront)"/>
        <g clip-path="url(#clipFront)">
          <ellipse cx="1190" cy="590" rx="300" ry="90" fill="url(#gDeep)" transform="rotate(-9 1190 590)"/>
          <ellipse cx="950" cy="705" rx="130" ry="60" fill="url(#gTeal)" opacity=".75"/>
          <ellipse cx="1420" cy="492" rx="130" ry="40" fill="url(#gTeal)"/>
          <ellipse cx="1470" cy="560" rx="40" ry="24" fill="url(#gTeal)" opacity=".35"/>
          <ellipse cx="910" cy="648" rx="30" ry="16" fill="url(#gTeal)" opacity=".5"/>
        </g>
        <polygon points="777,664 913,644 914,570 1591,466 1591,539 1455,560 1453,633 776,738" fill="none" stroke="#06143a" stroke-width="1"/>
        <!-- bottom nuts -->
        <g stroke="#02082a">
          <path d="M1077 711l17-4h36l13 4 1 26-6 4c-12 3-42 3-52 0l-8-5z" fill="#0a2c44"/>
          <path d="M1077 711l17-4h36l13 4 1 20-12 2-20-2-20 0-15 2z" fill="url(#gNutA)"/>
          <path d="M1078 732l17-1 20 1 16 1 12-3" fill="none" stroke="#25c8a0" stroke-width="2"/>
          <path d="M1098 707v24M1105 707v24" stroke-width=".8"/>
        </g>
        <g stroke="#02082a">
          <path d="M1237 696l17-6h36l15 6v22l-8 7c-10 4-44 4-52 0l-8-6z" fill="#020c34"/>
          <path d="M1237 696l17-6h36l15 6v22l-12 1-46-1z" fill="#0616c4"/>
          <path d="M1254 691h30v26h-30z" fill="#0a0ff0" stroke="none"/>
        </g>
        <g stroke="#02082a">
          <path d="M1186 686l14-7h34l20 5v24l-10 6c-14 5-44 4-50 0l-8-6z" fill="#020c34"/>
          <path d="M1186 686l14-7h34l20 5v24l-22-1-34 0-12 1z" fill="#0618b8"/>
          <path d="M1198 681h34v25h-34z" fill="#0a0ff0" stroke="none"/>
          <path d="M1198 681v25M1232 680v26" stroke-width=".8"/>
        </g>
        <g stroke="#02082a">
          <path d="M1348 668l14-3h40l12 4 0 24-6 7c-14 3-40 3-50 0l-9-6z" fill="#0a2c44"/>
          <path d="M1348 668l14-3h40l12 4v20l-12 2-18-2-20 1-16 2z" fill="url(#gNutB)"/>
          <path d="M1349 692l16-2 18-1 19 2 11-2" fill="none" stroke="#25c8a0" stroke-width="2"/>
          <path d="M1403 665v26" stroke-width=".8"/>
        </g>
        <!-- triad -->
        <g shape-rendering="crispEdges">
          <path d="M665.500 907V868" stroke="#0000e0" stroke-width="1.500"/>
          <path d="M665.500 860l-4 10h8z" fill="#0000e0"/>
          <path d="M665 907 693 902" stroke="#f00" stroke-width="1.500"/>
          <path d="M704 901l-10-3v6z" fill="#f00"/>
          <path d="M665 907 690 912" stroke="#0e0" stroke-width="1.500"/>
          <path d="M696 913l-8-4v7z" fill="#0e0"/>
        </g>
        <text x="668" y="864" font-size="13" font-weight="700" fill="#1a1ae6" font-family="Liberation Sans,sans-serif">Z</text>
        <text x="698" y="898" font-size="13" font-weight="700" fill="#f00" font-family="Liberation Sans,sans-serif">X</text>
        <text x="692" y="908" font-size="12" font-weight="700" fill="#0d0" font-family="Liberation Sans,sans-serif">Y</text>
        <!-- legend bar -->
        <g id="legendBar" shape-rendering="crispEdges"></g>
      </svg>
      <div class="legend-title">Mises<br><span class="legend-pa">( Pa )</span></div>
      <span class="legend-val val-1">8.138e+08</span>
      <span class="legend-val val-2">5.425e+08</span>
      <span class="legend-val val-3">2.713e+08</span>
      <span class="legend-val val-4">0.000e+00</span>
      <div class="view-caption">结果模型:step-1 : 线性静力分析</div>
    </div>
  </section>
</main>

<footer class="status-bar d-flex justify-content-between">
  <span class="status-l">有效, 内部名称: Force</span>
  <span class="status-r">2.6e+02 mm x 1.5e+02 mm</span>
</footer>

<div class="task-bar">
  <svg class="tk tk-win" width="20" height="20" viewBox="0 0 20 20"><path d="M0 3l8-1v7.500H0zM9 1.800 20 0v9.500H9zM0 10.500h8V18l-8-1zM9 10.500h11V20L9 18.200z" fill="#fff"/></svg>
  <svg class="tk tk-find" width="22" height="24" viewBox="0 0 22 24"><circle cx="13" cy="9" r="7" fill="none" stroke="#fff" stroke-width="1.400"/><path d="M8 14 2 23" stroke="#fff" stroke-width="1.600"/></svg>
  <div class="search-box">
    公路施工组织设计
    <svg class="tk tk-ie" width="36" height="26" viewBox="0 0 36 26"><path d="M3 14c0-7 4-11 9-11s8 4 8 10H8c0 5 7 6 11 2l1 5c-7 5-17 2-17-6zm5-3h7c0-3-1-5-3.500-5S8 8 8 11z" fill="#3aa0e8"/><path d="M0 24c1-7 10-20 22-22-8 5-15 13-20 22z" fill="#7ac4f2"/><path d="M27 15h8l-4-6z" fill="#aaa"/></svg>
  </div>
  <div class="search-go">搜索一下</div>
  <div class="task-sep"></div>
  <svg class="task-app tk-folder" width="28" height="50" viewBox="0 0 28 50"><path d="M1 12h11l2 3h13v7H1z" fill="#e3a51c"/><rect x="1" y="15" width="26" height="24" rx="1" fill="#f8ce54"/><path d="M8 39V29h12v10z" fill="#4a9ad4"/><rect x="11" y="33" width="6" height="6" fill="#f8ce54"/></svg>
  <svg class="task-app tk-xl" width="30" height="50" viewBox="0 0 30 50"><rect x="8" y="11" width="21" height="29" rx="1" fill="#1d7a46"/><rect x="18" y="11" width="11" height="9" fill="#37c172"/><rect x="18" y="20" width="11" height="10" fill="#21a366"/><rect x="8" y="30" width="21" height="10" fill="#185c37"/><rect x="0" y="16" width="16" height="18" rx="1" fill="#107c41"/><text x="8" y="30" text-anchor="middle" font-size="13" font-weight="700" fill="#fff" font-family="Liberation Sans,sans-serif">X</text></svg>
  <svg class="task-app tk-wd" width="30" height="50" viewBox="0 0 30 50"><rect x="8" y="11" width="21" height="29" rx="1" fill="#2b7cd3"/><rect x="8" y="11" width="21" height="9" fill="#41a5ee"/><rect x="8" y="30" width="21" height="10" fill="#185abd"/><rect x="0" y="16" width="16" height="18" rx="1" fill="#185abd"/><text x="8" y="30" text-anchor="middle" font-size="13" font-weight="700" fill="#fff" font-family="Liberation Sans,sans-serif">W</text></svg>
  <div class="task-app task-under"></div>
  <svg class="task-app tk-s" width="30" height="50" viewBox="0 0 30 50"><ellipse cx="15" cy="25" rx="15" ry="15" fill="#e8eaee"/><path d="M28 15c4 9 0 21-10 25 6-5 8-11 4-16-4 3-10 2-12-2 3 1 8 0 10-3 3-3 6-4 8-4z" fill="#1a4fa0"/><path d="M2 34c-4-9 1-22 11-24-6 5-8 11-4 16 4-3 9-2 11 2-3-1-8 0-10 3-3 3-6 3-8 3z" fill="#23a0dc"/></svg>
  <div class="task-app task-active"><svg class="mx-auto" width="30" height="30" viewBox="0 0 30 30" role="img"><rect y="0" width="30" height="30" rx="2" fill="#1f7ae0"/><path d="M5 7l10-4 10 4-10 4zM5 12l4 1.500v3.500l-4-1.500zM11 14l14-5v4l-14 5zM5 19l4 1.500V24l-4-1.500zM11 21l14-5v4l-14 5z" fill="#fff"/></svg></div>

  <svg class="tk tk-help" width="26" height="26" viewBox="0 0 26 26"><circle cx="13" cy="13" r="12.500" fill="#fff"/><circle cx="13" cy="13" r="10.500" fill="#1c9ad6"/><text x="13" y="19" text-anchor="middle" font-size="17" font-weight="700" fill="#fff" font-family="Liberation Sans,sans-serif">?</text></svg>
  <svg class="tk tk-up" width="16" height="10" viewBox="0 0 16 10"><path d="M1 9 8 2l7 7" fill="none" stroke="#eee" stroke-width="1.300"/></svg>
  <svg class="tk tk-wifi" width="16" height="16" viewBox="0 0 16 16"><path d="M1 15C1 8 7 2 14 1M4.500 15c0-5 4-9 9-10M8 15c0-3 2-5 5-6" fill="none" stroke="#aaa" stroke-width="1.200" stroke-dasharray="2 1"/><circle cx="13.500" cy="14" r="1.600" fill="#eee"/></svg>
  <svg class="tk tk-game" width="20" height="20" viewBox="0 0 20 20"><circle cx="10" cy="10" r="10" fill="#2ca548"/><path d="M0 9C1 3 6 0 10 0s8 2 9 6c-6 0-6 3-9 4-4 0-6-2-10-1z" fill="#f2d21e"/><rect x="8" y="9" width="12" height="8" rx="2" fill="#9ad0f5"/><path d="M10 13h3M11.500 11.500v3" stroke="#246"/></svg>
  <svg class="tk tk-bat" width="20" height="14" viewBox="0 0 20 14"><path d="M.5 3h3M.5 7h3M3 5h2" stroke="#eee"/><rect x="5.500" y="2.500" width="13" height="10" fill="none" stroke="#eee"/><rect x="7" y="4" width="10" height="7" fill="#eee"/></svg>
  <svg class="tk tk-vol" width="20" height="20" viewBox="0 0 20 20"><path d="M1 7h3l5-5v16l-5-5H1z" fill="none" stroke="#ddd"/><path d="M12 7c1 2 1 4 0 6M15 4c2 4 2 8 0 12" fill="none" stroke="#999"/></svg>
  <span class="tray-txt tray-en">英</span>
  <span class="tray-txt tray-pin">拼</span>
  <div class="tray-txt tray-clock">0:16 周二<br>2022/12/6</div>
  <svg class="tk tk-note" width="20" height="18" viewBox="0 0 20 18"><path d="M0 0h20v16H0z" fill="#fff"/><path d="M3 4h14M3 8h14M3 12h9" stroke="#222" stroke-width="1.200"/></svg>
  <span class="tray-badge">1</span>
</div>
</div>

<script src="https://cdn.jsdelivr.net/npm/bootstrap@5.3.0/dist/js/bootstrap.bundle.min.js"></script>
<script>
(function(){
  var g=document.getElementById('legendBar'),n=63,top=689,h=274;
  function col(t){
    var s=[[0,[255,0,0]],[.26,[255,255,0]],[.5,[0,255,0]],[.75,[0,255,255]],[1,[0,0,255]]];
    for(var i=0;i<4;i++){ if(t<=s[i+1][0]){var a=s[i],b=s[i+1],u=(t-a[0])/(b[0]-a[0]);
      return 'rgb('+a[1].map(function(v,k){return Math.round(v+(b[1][k]-v)*u)}).join(',')+')';}}
    return 'rgb(0,0,255)';
  }
  var html='';
  for(var i=0;i<n;i++){
    html+='<rect x="1821" y="'+(top+i*h/n)+'" width="15" height="'+(h/n+.5)+'" fill="'+col(i/(n-1))+'"/>';
  }
  g.innerHTML=html;
})();
</script>
</body>
</html>
